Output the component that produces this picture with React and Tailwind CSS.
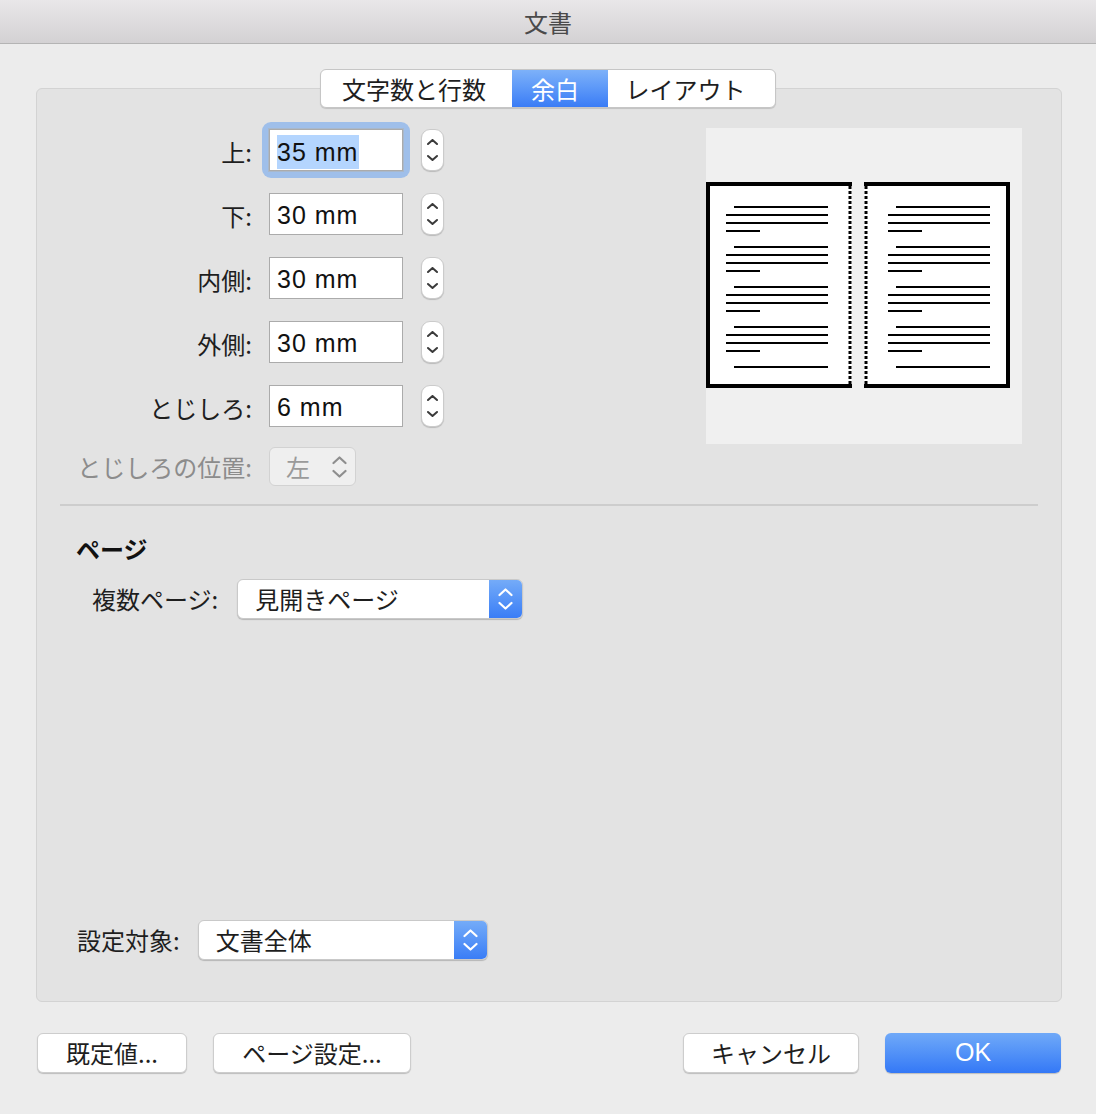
import React from 'react'

const jp = "font-['Noto_Sans_CJK_JP',sans-serif]"
const num = "font-['Liberation_Sans','Noto_Sans_CJK_JP',sans-serif]"

function StepperIcon({ color = '#3a3a3a' }) {
  return (
    <svg width="11" height="22" viewBox="0 0 11 22" fill="none">
      <path d="M1 5L5.5 1L10 5" stroke={color} strokeWidth="2" strokeLinecap="round" strokeLinejoin="round" />
      <path d="M1 17L5.5 21L10 17" stroke={color} strokeWidth="2" strokeLinecap="round" strokeLinejoin="round" />
    </svg>
  )
}

function PopupChevrons({ color = '#fff' }) {
  return (
    <svg width="15" height="22" viewBox="0 0 15 22" fill="none">
      <path d="M1.5 7L7.5 1.5L13.5 7" stroke={color} strokeWidth="2.2" strokeLinecap="round" strokeLinejoin="round" />
      <path d="M1.5 15L7.5 20.5L13.5 15" stroke={color} strokeWidth="2.2" strokeLinecap="round" strokeLinejoin="round" />
    </svg>
  )
}

function Stepper() {
  return (
    <div className="w-[23px] h-[42px] rounded-[9px] bg-white border border-[#cbcbcb] shadow-[0_1px_1px_rgba(0,0,0,0.18)] flex items-center justify-center">
      <StepperIcon />
    </div>
  )
}

function Field({ label, value, focused }) {
  const input = (
    <div className={`w-[134px] h-[42px] bg-white border border-[#ababab] flex items-center pl-[7px] pt-[4px] text-[25px] tracking-[1px] text-[#111] ${num}`}>
      {focused ? <span className="bg-[#b4d5fe] leading-[34px] pr-px">{value}</span> : value}
    </div>
  )
  return (
    <div className="flex items-center h-[42px]">
      <div className={`w-[215px] text-right text-[24px] leading-[32px] pt-[3px] text-[#1e1e1e] ${jp}`}>{label}</div>
      <div className="ml-[17px]">
        {focused ? (
          <div className="-m-[7px] p-[6px] rounded-[9px] bg-[#9fbfea]">
            <div className="border border-[#a8b8cc]">{input}</div>
          </div>
        ) : input}
      </div>
      <div className="ml-[18px]">
        <Stepper />
      </div>
    </div>
  )
}

function Popup({ text, width }) {
  return (
    <div
      className="h-[40px] flex rounded-[6px] bg-white border border-[#c9c9c9] shadow-[0_1px_1px_rgba(0,0,0,0.2)] overflow-hidden"
      style={{ width }}
    >
      <div className={`flex-1 flex items-center pl-[17px] text-[24px] text-[#1e1e1e] ${jp}`}>{text}</div>
      <div className="w-[33px] bg-gradient-to-b from-[#74abf8] to-[#3a7df6] flex items-center justify-center">
        <PopupChevrons />
      </div>
    </div>
  )
}

function Button({ children, width, primary }) {
  if (primary) {
    return (
      <div
        className={`h-[40px] rounded-[6px] bg-gradient-to-b from-[#70a9f8] to-[#3478f6] shadow-[0_1px_1px_rgba(0,0,0,0.2)] flex items-center justify-center text-white text-[25px] ${num}`}
        style={{ width }}
      >
        {children}
      </div>
    )
  }
  return (
    <div
      className={`h-[40px] rounded-[6px] bg-white border border-[#cdcdcd] shadow-[0_1px_1px_rgba(0,0,0,0.2)] flex items-center justify-center text-[24px] text-[#1e1e1e] ${jp}`}
      style={{ width }}
    >
      {children}
    </div>
  )
}

function PageLines({ x0, indent, end, short }) {
  const rows = []
  for (let g = 0; g < 4; g++) {
    const y = 78 + g * 40
    rows.push(<rect key={`a${g}`} x={indent} y={y} width={end - indent} height="2" fill="#000" />)
    rows.push(<rect key={`b${g}`} x={x0} y={y + 8} width={end - x0} height="2" fill="#000" />)
    rows.push(<rect key={`c${g}`} x={x0} y={y + 16} width={end - x0} height="2" fill="#000" />)
    rows.push(<rect key={`d${g}`} x={x0} y={y + 24} width={short - x0} height="2" fill="#000" />)
  }
  rows.push(<rect key="last" x={indent} y={238} width={end - indent} height="2" fill="#000" />)
  return rows
}

function Preview() {
  return (
    <div className="w-[316px] h-[316px] bg-[#f0f0f0]">
      <svg width="316" height="316" viewBox="0 0 316 316">
        {/* left page */}
        <rect x="0" y="54" width="146" height="206" fill="#fff" />
        <path d="M146 56H2V258H146" stroke="#000" strokeWidth="4" fill="none" />
        <line x1="144" y1="58" x2="144" y2="256" stroke="#000" strokeWidth="3" strokeDasharray="3 2" />
        <PageLines x0={20} indent={28} end={122} short={54} />
        {/* right page */}
        <rect x="158" y="54" width="146" height="206" fill="#fff" />
        <path d="M158 56H302V258H158" stroke="#000" strokeWidth="4" fill="none" />
        <line x1="160" y1="58" x2="160" y2="256" stroke="#000" strokeWidth="3" strokeDasharray="3 2" />
        <PageLines x0={182} indent={190} end={284} short={216} />
      </svg>
    </div>
  )
}

export default function App() {
  return (
    <div className="w-[1096px] h-[1114px] bg-[#ececec] overflow-hidden">
      {/* title bar */}
      <div className="h-[44px] bg-gradient-to-b from-[#e9e7e9] to-[#d3d1d3] border-b border-[#b4b4b4] flex items-center justify-center">
        <span className={`text-[24px] text-[#4a4a4a] leading-none ${jp}`}>文書</span>
      </div>

      <div className="pt-[25px]">
        {/* tabs */}
        <div className="relative z-10 flex justify-center">
          <div className={`flex h-[39px] rounded-[6px] bg-white border border-[#c6c6c6] shadow-[0_1px_1px_rgba(0,0,0,0.15)] overflow-hidden text-[24px] text-[#1e1e1e] ${jp}`}>
            <div className="w-[191px] flex items-center justify-center pr-[5px]">文字数と行数</div>
            <div className="w-[96px] flex items-center justify-center pr-[10px] text-white bg-gradient-to-b from-[#7db1f9] to-[#3a7cf6]">余白</div>
            <div className="w-[167px] flex items-center justify-center pr-[12px]">レイアウト</div>
          </div>
        </div>

        {/* panel */}
        <div className="ml-[36px] mr-[34px] -mt-[20px] h-[914px] bg-[#e3e3e3] border border-[#d3d3d3] rounded-[6px] flex flex-col pt-[40px] pb-[41px]">
          <div className="flex items-start">
            <div className="flex flex-col">
              <div className="flex flex-col gap-[22px]">
                <Field label="上:" value="35 mm" focused />
                <Field label="下:" value="30 mm" />
                <Field label="内側:" value="30 mm" />
                <Field label="外側:" value="30 mm" />
                <Field label="とじしろ:" value="6 mm" />
              </div>
              <div className="flex items-center mt-[20px] h-[39px]">
                <div className={`w-[215px] text-right text-[24px] leading-[32px] text-[#8c8c8c] ${jp}`}>とじしろの位置:</div>
                <div className="ml-[17px] w-[87px] h-[39px] rounded-[6px] bg-[#efefef] border border-[#d2d2d2] flex items-center justify-between pl-[16px] pr-[8px]">
                  <span className={`text-[24px] text-[#9a9a9a] ${jp}`}>左</span>
                  <PopupChevrons color="#8e8e8e" />
                </div>
              </div>
            </div>
            <div className="ml-auto mr-[39px] -mt-px">
              <Preview />
            </div>
          </div>

          <div className="mx-[23px] mt-[18px] h-[2px] bg-[#cdcdcd]" />

          <div className={`mt-[27px] pl-[39px] text-[24px] leading-[32px] font-bold text-[#111] ${jp}`}>ページ</div>

          <div className="mt-[14px] pl-[55px] flex items-center">
            <span className={`text-[24px] text-[#1e1e1e] ${jp}`}>複数ページ:</span>
            <div className="ml-[19px]">
              <Popup text="見開きページ" width={286} />
            </div>
          </div>

          <div className="mt-auto pl-[40px] flex items-center">
            <span className={`text-[24px] text-[#1e1e1e] ${jp}`}>設定対象:</span>
            <div className="ml-[18px]">
              <Popup text="文書全体" width={290} />
            </div>
          </div>
        </div>

        {/* footer buttons */}
        <div className="flex items-center mt-[31px] pl-[37px] pr-[35px]">
          <Button width={150}>既定値...</Button>
          <div className="ml-[26px]">
            <Button width={198}>ページ設定...</Button>
          </div>
          <div className="ml-auto">
            <Button width={176}>キャンセル</Button>
          </div>
          <div className="ml-[26px]">
            <Button width={176} primary>OK</Button>
          </div>
        </div>
      </div>
    </div>
  )
}
